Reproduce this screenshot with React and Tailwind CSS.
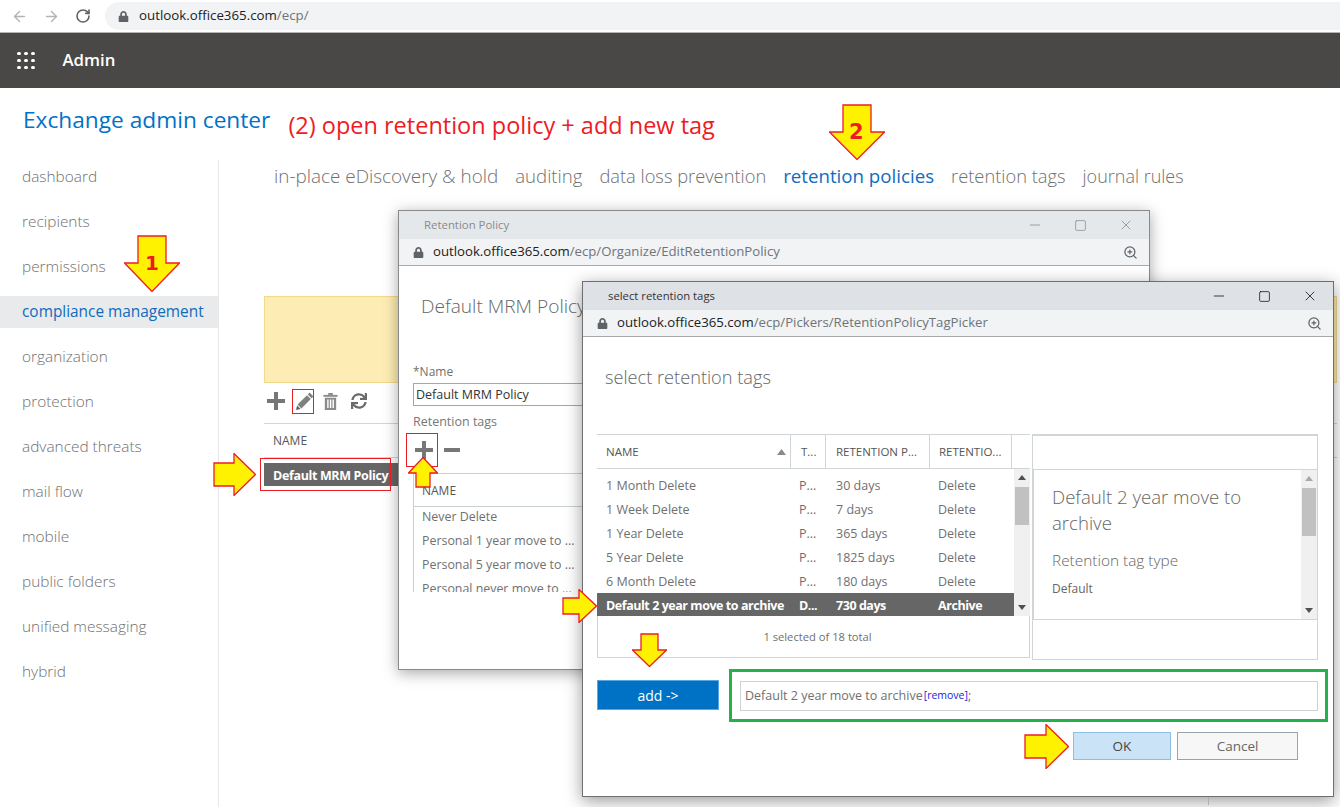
import React from 'react'
import { ArrowLeft, ArrowRight, RotateCw, ZoomIn, Minus, Square, X } from 'lucide-react'
import { FaLock, FaSync } from 'react-icons/fa'

const navItems = ['dashboard', 'recipients', 'permissions', 'compliance management', 'organization', 'protection', 'advanced threats', 'mail flow', 'mobile', 'public folders', 'unified messaging', 'hybrid']

const tagRows = [
  ['1 Month Delete', 'P...', '30 days', 'Delete'],
  ['1 Week Delete', 'P...', '7 days', 'Delete'],
  ['1 Year Delete', 'P...', '365 days', 'Delete'],
  ['5 Year Delete', 'P...', '1825 days', 'Delete'],
  ['6 Month Delete', 'P...', '180 days', 'Delete'],
]

// yellow callout arrows, w/h box with the head starting at `neck`
function ArrowDown({ className, w, h, neck, inset }) {
  return (
    <svg className={className} width={w} height={h} viewBox={`0 0 ${w} ${h}`}>
      <polygon points={`${inset},1 ${w - inset},1 ${w - inset},${neck} ${w - 0.5},${neck} ${w / 2},${h - 0.5} 0.5,${neck} ${inset},${neck}`} fill="#fff200" stroke="#ed1c24" strokeWidth="1.3" />
    </svg>
  )
}

function ArrowRightShape({ className, w, h, neck, inset }) {
  return (
    <svg className={className} width={w} height={h} viewBox={`0 0 ${w} ${h}`}>
      <polygon points={`1,${inset} ${neck},${inset} ${neck},0.5 ${w - 0.5},${h / 2} ${neck},${h - 0.5} ${neck},${h - inset} 1,${h - inset}`} fill="#fff200" stroke="#ed1c24" strokeWidth="1.3" />
    </svg>
  )
}

function ArrowUp({ className, w, h, neck, inset }) {
  return (
    <svg className={className} width={w} height={h} viewBox={`0 0 ${w} ${h}`}>
      <polygon points={`${w / 2},0.5 ${w - 0.5},${neck} ${w - inset},${neck} ${w - inset},${h - 1} ${inset},${h - 1} ${inset},${neck} 0.5,${neck}`} fill="#fff200" stroke="#ed1c24" strokeWidth="1.3" />
    </svg>
  )
}

function PlusIcon({ size = 18, color = '#777777' }) {
  return (
    <svg width={size} height={size} viewBox="0 0 18 18">
      <rect x="7" y="0" width="4" height="18" fill={color} />
      <rect x="0" y="7" width="18" height="4" fill={color} />
    </svg>
  )
}

function PencilIcon() {
  return (
    <svg width="18" height="18" viewBox="0 0 18 18" fill="#808080">
      <path d="M13.6 0.6 L17.4 4.4 L15.6 6.2 L11.8 2.4 Z" />
      <path d="M11 3.2 L14.8 7 L5.4 16.4 L1.6 12.6 Z" />
      <path d="M1.1 13.4 L4.6 16.9 L0 18 Z" fill="#5f5f5f" />
    </svg>
  )
}

function TrashIcon() {
  return (
    <svg width="15" height="17" viewBox="0 0 15 18" fill="#8a8a8a">
      <rect x="0" y="2" width="15" height="2" />
      <rect x="5" y="0" width="5" height="2" />
      <path d="M1.5 5h12v13h-12zM4 7v9h1.5V7zM6.8 7v9h1.5V7zM9.6 7v9h1.5V7z" fillRule="evenodd" />
    </svg>
  )
}

function UrlBar({ host, path }) {
  return (
    <div className="h-[27px] flex items-center pl-[14px] pr-[11px] border-b border-[#aaaaaa] bg-[#f1f3f4]">
      <FaLock size={11} className="text-[#5f6368]" />
      <span className="ml-[9px] text-[13.2px] text-[#202124]">{host}</span>
      <span className="text-[13.2px] text-[#6f7479]">{path}</span>
      <ZoomIn size={15} className="ml-auto text-[#5f6368]" />
    </div>
  )
}

function WindowControls({ color }) {
  return (
    <div className={`ml-auto flex items-center gap-[31px] pr-[15px] ${color}`}>
      <Minus size={16} strokeWidth={1.2} />
      <Square size={13} strokeWidth={1.4} />
      <X size={16} strokeWidth={1.2} />
    </div>
  )
}

function PolicyWindow() {
  return (
    <div className="absolute left-[398px] top-[210px] w-[752px] h-[460px] bg-white border border-[#8a8a8a] shadow-[0_3px_14px_rgba(0,0,0,0.35)]">
      <div className="h-[28px] bg-[#e5e8eb] flex items-center pl-[25px]">
        <span className="text-[11.4px] text-[#8a8a8a]">Retention Policy</span>
        <WindowControls color="text-[#8a8a8a]" />
      </div>
      <UrlBar host="outlook.office365.com" path="/ecp/Organize/EditRetentionPolicy" />
      <div className="pl-[14px]">
        <div className="pt-[27px] pl-[8px] text-[19.1px] font-light leading-[26px] text-[#666666]">Default MRM Policy</div>
        <div className="mt-[45px] text-[12px] leading-[16px] text-[#707070]">*Name</div>
        <div className="mt-[3px] w-[400px] h-[23px] border border-[#a6a6a6] pl-[2px] text-[12.5px] leading-[21px] text-[#333333]">Default MRM Policy</div>
        <div className="mt-[8px] text-[12.5px] leading-[16px] text-[#777777]">Retention tags</div>
        <div className="mt-[10px] flex items-center gap-[11px] pl-[2px] h-[20px]">
          <PlusIcon />
          <svg width="16" height="4"><rect width="16" height="4" fill="#777777" /></svg>
        </div>
        <div className="mt-[13px] w-[400px] h-[119px] overflow-hidden border-l border-t border-[#c8d0d4]">
          <div className="h-[33px] border-b border-[#c8d0d4] pl-[8px] text-[12px] leading-[33px] text-[#555555]">NAME</div>
          <div className="pl-[8px] pt-[1px] text-[12.4px] leading-[18px] text-[#707070] space-y-[6px]">
            <div className="whitespace-nowrap">Never Delete</div>
            <div className="whitespace-nowrap">Personal 1 year move to ...</div>
            <div className="whitespace-nowrap">Personal 5 year move to ...</div>
            <div className="whitespace-nowrap">Personal never move to ...</div>
          </div>
        </div>
      </div>
    </div>
  )
}

function Scrollbar({ thumb, upColor = '#505050' }) {
  return (
    <div className="w-[16px] bg-[#f0f0f0] flex flex-col items-center pt-[6px] pb-[6px]">
      <svg width="8" height="5"><polygon points="4,0 8,5 0,5" fill={upColor} /></svg>
      <div className={`w-[14px] mt-[7px] bg-[#c1c1c1] ${thumb}`} />
      <svg className="mt-auto" width="8" height="5"><polygon points="0,0 8,0 4,5" fill="#505050" /></svg>
    </div>
  )
}

function TagTable() {
  return (
    <div className="w-[433px]">
      <div className="h-[35px] grid grid-cols-[194px_35px_104px_82px_18px] border-t border-b border-[#d0d5d8] text-[11.5px] leading-[33px] text-[#555555]">
        <div className="pl-[9px] pr-[4px] flex items-center justify-between border-r border-[#d0d5d8]">
          NAME
          <svg width="9" height="6"><polygon points="4.5,0 9,6 0,6" fill="#8a8a8a" /></svg>
        </div>
        <div className="pl-[10px] border-r border-[#d0d5d8]">T...</div>
        <div className="pl-[10px] border-r border-[#d0d5d8] whitespace-nowrap">RETENTION P...</div>
        <div className="pl-[9px] border-r border-[#d0d5d8] whitespace-nowrap">RETENTIO...</div>
        <div />
      </div>
      <div className="h-[147px] flex">
        <div className="flex-1 flex flex-col justify-end">
          {tagRows.map((r) => (
            <div key={r[0]} className="h-[24px] pt-[2px] grid grid-cols-[193px_35px_104px_1fr] items-center text-[12.5px] text-[#707070]">
              <div className="pl-[9px]">{r[0]}</div>
              <div className="pl-[9px]">{r[1]}</div>
              <div className="pl-[11px]">{r[2]}</div>
              <div className="pl-[9px]">{r[3]}</div>
            </div>
          ))}
          <div className="h-[23px] pt-[3px] bg-[#666666] grid grid-cols-[193px_35px_104px_1fr] items-center text-[12.5px] font-bold text-white whitespace-nowrap tracking-[-0.45px]">
            <div className="pl-[9px]">Default 2 year move to archive</div>
            <div className="pl-[9px]">D...</div>
            <div className="pl-[11px]">730 days</div>
            <div className="pl-[9px]">Archive</div>
          </div>
        </div>
        <Scrollbar thumb="h-[38px]" />
      </div>
      <div className="h-[42px] pl-[8px] pt-[2px] border border-t-0 border-[#d0d5d8] flex items-center justify-center text-[11.2px] text-[#707070]">1 selected of 18 total</div>
    </div>
  )
}

function DetailPane() {
  return (
    <div className="w-[286px] h-[226px] border border-t-2 border-[#d0d5d8]">
      <div className="h-[33px]" />
      <div className="h-[151px] flex border-t border-b border-l border-[#d0d5d8]">
        <div className="flex-1 pl-[18px] pt-[14px] text-[#666666]">
          <div className="text-[18.6px] font-light leading-[26px]">Default 2 year move to archive</div>
          <div className="mt-[14px] text-[15.4px] font-light leading-[22px]">Retention tag type</div>
          <div className="mt-[9px] text-[12px] leading-[16px]">Default</div>
        </div>
        <Scrollbar thumb="h-[48px]" upColor="#a8a8a8" />
      </div>
    </div>
  )
}

function TagPickerWindow() {
  return (
    <div className="absolute left-[582px] top-[281px] w-[752px] h-[516px] bg-white border border-[#6f6f6f] border-t-[#2f7fc4] shadow-[0_4px_16px_rgba(0,0,0,0.4)]">
      <div className="h-[28px] bg-[#dee1e6] flex items-center pl-[25px]">
        <span className="text-[11.3px] text-[#333333]">select retention tags</span>
        <WindowControls color="text-[#111111]" />
      </div>
      <UrlBar host="outlook.office365.com" path="/ecp/Pickers/RetentionPolicyTagPicker" />
      <div className="pl-[14px] pr-[15px]">
        <div className="pl-[8px] pt-[27px] text-[18.2px] font-light leading-[26px] text-[#666666]">select retention tags</div>
        <div className="mt-[44px] flex gap-[2px]">
          <TagTable />
          <DetailPane />
        </div>
        <div className="mt-[9px] flex items-start">
          <button className="mt-[11px] w-[122px] h-[30px] bg-[#0072c6] border border-[#5aa7e0] text-white text-[14px]">add -&gt;</button>
          <div className="ml-[10px] w-[599px] h-[53px] -mr-[10px] border-[3px] border-[#22b14c] pl-[8px] pr-[7px] pt-[9px]">
            <div className="h-[30px] border border-[#ccd2d6] pl-[4px] flex items-center text-[12.5px] text-[#707070]">
              Default 2 year move to archive
              <span className="ml-[1px] text-[10.5px] text-[#2222dd]">[remove]</span>;
            </div>
          </div>
        </div>
        <div className="mt-[10px] flex gap-[6px] pl-[476px]">
          <button className="w-[98px] h-[28px] pt-[1px] bg-[#cbe3f6] border border-[#8fbfe0] text-[13.5px] text-[#444444]">OK</button>
          <button className="w-[121px] h-[28px] pt-[1px] bg-[#f7f7f7] border border-[#9aa5a5] text-[13.5px] text-[#666666]">Cancel</button>
        </div>
      </div>
    </div>
  )
}

export default function App() {
  return (
    <div className="relative w-[1340px] h-[807px] overflow-hidden bg-white font-['Open_Sans','Noto_Sans',sans-serif]">
      {/* browser chrome */}
      <div className="h-[33px] flex items-center border-b border-[#b5b5b5]">
        <div className="flex items-center pl-[11px] gap-[15px]">
          <ArrowLeft size={17} className="text-[#b4b4b4]" />
          <ArrowRight size={17} className="text-[#b4b4b4]" />
          <RotateCw size={16} strokeWidth={2.4} className="text-[#5f6368]" />
        </div>
        <div className="ml-[14px] flex-1 h-[28px] rounded-l-[14px] bg-[#f1f3f4] flex items-center pl-[13px]">
          <FaLock size={11} className="text-[#5f6368]" />
          <span className="ml-[10px] text-[13.3px] text-[#202124]">outlook.office365.com</span>
          <span className="text-[13.3px] text-[#6f7479]">/ecp/</span>
        </div>
      </div>

      {/* admin bar */}
      <div className="h-[55px] bg-[#4a4846] flex items-center pl-[17px]">
        <div className="grid grid-cols-3 gap-[3.5px]">
          {[0, 1, 2, 3, 4, 5, 6, 7, 8].map((i) => (
            <span key={i} className="w-[3.5px] h-[3.5px] rounded-full bg-white" />
          ))}
        </div>
        <span className="ml-[28px] pb-[2px] text-[16.8px] font-semibold text-white">Admin</span>
      </div>

      {/* title row */}
      <div className="h-[72px] flex items-start pl-[23px]">
        <span className="mt-[15px] text-[22.7px] leading-[34px] text-[#0072c6]">Exchange admin center</span>
        <span className="mt-[19px] ml-[18px] text-[23.5px] leading-[36px] text-[#ed1c24]">(2) open retention policy + add new tag</span>
      </div>

      <div className="flex">
        <aside className="w-[219px] h-[647px] border-r border-[#e8e8e8] pt-[1px]">
          {navItems.map((item) => (
            <div
              key={item}
              className={`h-[32px] mb-[13px] pl-[22px] flex items-center text-[15.4px] font-light whitespace-nowrap ${item === 'compliance management' ? 'bg-[#e9eaec] text-[#0f6cbd] font-normal' : 'text-[#707070]'} last:mb-0`}
            >
              {item}
            </div>
          ))}
        </aside>

        <main className="flex-1 pl-[45px] pr-[3px]">
          <div className="flex pl-[10px] gap-[17px] h-[136px] font-light leading-[32px] whitespace-nowrap text-[#707070]">
            <span className="text-[18.9px]">in-place eDiscovery &amp; hold</span>
            <span className="text-[18.6px]">auditing</span>
            <span className="text-[18.3px]">data loss prevention</span>
            <span className="text-[18.7px] font-normal text-[#0f6cbd]">retention policies</span>
            <span className="text-[18.3px]">retention tags</span>
            <span className="text-[18px]">journal rules</span>
          </div>
          <div className="h-[87px] bg-[#fdedb4] border border-[#f5d98a]" />
          <div className="h-[41px] flex items-center pl-[3px] pb-[4px] border-b border-[#d0d5d8]">
            <PlusIcon />
            <span className="ml-[11px]"><PencilIcon /></span>
            <span className="ml-[9px]"><TrashIcon /></span>
            <FaSync size={16} className="ml-[13px] text-[#6b6b6b]" />
          </div>
          <div className="h-[34px] border-b border-[#d0d5d8] pl-[9px] text-[12px] leading-[34px] text-[#555555]">NAME</div>
          <div className="mt-[5px] w-[400px] h-[23px] bg-[#666666] pl-[9px] text-[12.5px] leading-[25px] font-bold text-white tracking-[-0.35px] whitespace-nowrap">Default MRM Policy</div>
        </main>
      </div>

      <PolicyWindow />
      <TagPickerWindow />

      {/* annotations */}
      <div className="absolute left-[292px] top-[389px] w-[22px] h-[25px] border border-[#ed1c24]" />
      <div className="absolute left-[260px] top-[458px] w-[131px] h-[33px] border border-[#ed1c24]" />
      <div className="absolute left-[406px] top-[433px] w-[32px] h-[34px] border border-[#ed1c24]" />
      <div className="absolute left-[1208px] top-[797px] w-px h-[8px] bg-[#b0b0b0]" />
      <ArrowDown className="absolute left-[124px] top-[235px]" w={56} h={57} neck={28} inset={14} />
      <span className="absolute left-[145px] top-[250px] text-[20px] leading-[26px] font-bold text-[#ed1c24] font-['DejaVu_Sans',sans-serif]">1</span>
      <ArrowDown className="absolute left-[829px] top-[104px]" w={56} h={56} neck={28} inset={14} />
      <span className="absolute left-[849px] top-[119px] text-[21px] leading-[26px] font-bold text-[#ed1c24] font-['DejaVu_Sans',sans-serif]">2</span>
      <ArrowRightShape className="absolute left-[213px] top-[453px]" w={43} h={43} neck={21} inset={10} />
      <ArrowUp className="absolute left-[408px] top-[457px]" w={30} h={31} neck={16} inset={8} />
      <ArrowRightShape className="absolute left-[562px] top-[589px]" w={35} h={34} neck={17} inset={9} />
      <ArrowDown className="absolute left-[632px] top-[633px]" w={35} h={34} neck={17} inset={9} />
      <ArrowRightShape className="absolute left-[1024px] top-[724px]" w={45} h={45} neck={22} inset={11} />
    </div>
  )
}
